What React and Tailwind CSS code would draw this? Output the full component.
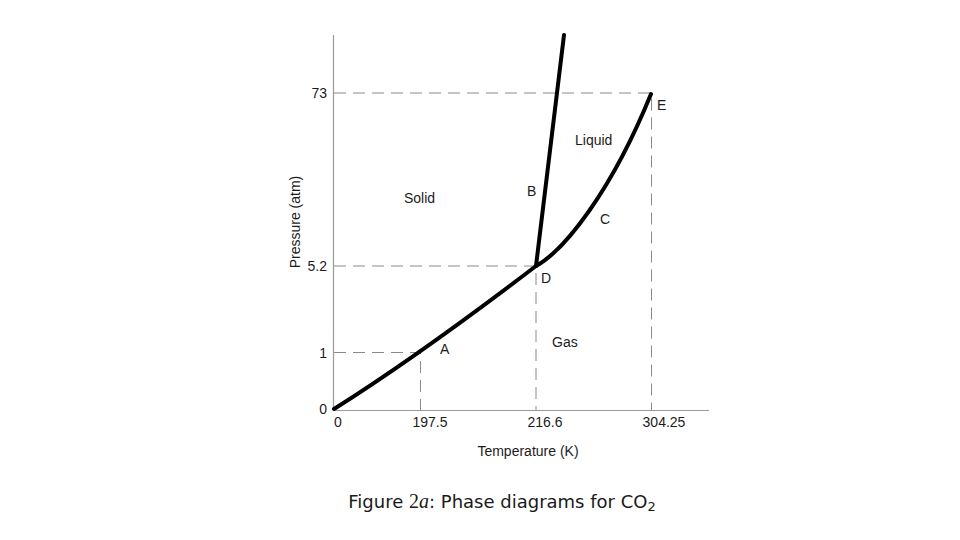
export default function App() {
  const dash = { stroke: '#8a8a8a', strokeWidth: 1, strokeDasharray: '12 7', fill: 'none' };

  return (
    <div className="w-[960px] h-[540px] bg-white flex flex-col items-center pt-[24px] pl-[44px]">
      <svg
        width="460"
        height="444"
        viewBox="272 24 460 444"
        className="block"
        style={{ fontFamily: '"Liberation Sans", Arial, sans-serif' }}
      >
        {/* axes */}
        <line x1="333.5" y1="35" x2="333.5" y2="410" stroke="#9a9a9a" strokeWidth="1.2" />
        <line x1="333" y1="410.5" x2="709" y2="410.5" stroke="#9a9a9a" strokeWidth="1.2" />

        {/* guide lines */}
        <path d="M334 93 H651.5 V410" {...dash} />
        <path d="M334 266 H536 V410" {...dash} />
        <path d="M334 352.5 H420.5 V410" {...dash} />

        {/* phase boundaries */}
        <g stroke="#000" strokeWidth="4" fill="none" strokeLinecap="round" strokeLinejoin="round">
          <path d="M334 409 Q418 356 536 266" />
          <path d="M536 266 L564 35" />
          <path d="M536 266 C565 250 612 190 651 94" />
        </g>

        <g fill="#1c1c1c" fontSize="14">
          {/* y ticks */}
          <text x="327" y="98" textAnchor="end">73</text>
          <text x="327" y="271" textAnchor="end">5.2</text>
          <text x="327" y="358" textAnchor="end">1</text>
          <text x="327" y="414" textAnchor="end">0</text>

          {/* x ticks */}
          <text x="338" y="427" textAnchor="middle">0</text>
          <text x="430" y="427" textAnchor="middle">197.5</text>
          <text x="545" y="427" textAnchor="middle">216.6</text>
          <text x="664" y="427" textAnchor="middle">304.25</text>

          {/* axis titles */}
          <text x="528" y="456" textAnchor="middle">Temperature (K)</text>
          <text x="300" y="222" textAnchor="middle" transform="rotate(-90 300 222)">Pressure (atm)</text>

          {/* regions and points */}
          <text x="404" y="203">Solid</text>
          <text x="575" y="145">Liquid</text>
          <text x="552" y="347">Gas</text>
          <text x="527" y="196">B</text>
          <text x="600" y="224">C</text>
          <text x="657" y="110">E</text>
          <text x="541" y="283">D</text>
          <text x="440" y="354">A</text>
        </g>
      </svg>

      <p className="mt-[21px] text-[18px] leading-[24px] text-[#1a1a1a] font-['DejaVu_Sans',Verdana,sans-serif]">
        Figure{' '}
        <span className="font-['Liberation_Serif',serif] text-[20px]">
          2<i>a</i>
        </span>
        : Phase diagrams for CO<sub className="text-[13px]">2</sub>
      </p>
    </div>
  );
}
